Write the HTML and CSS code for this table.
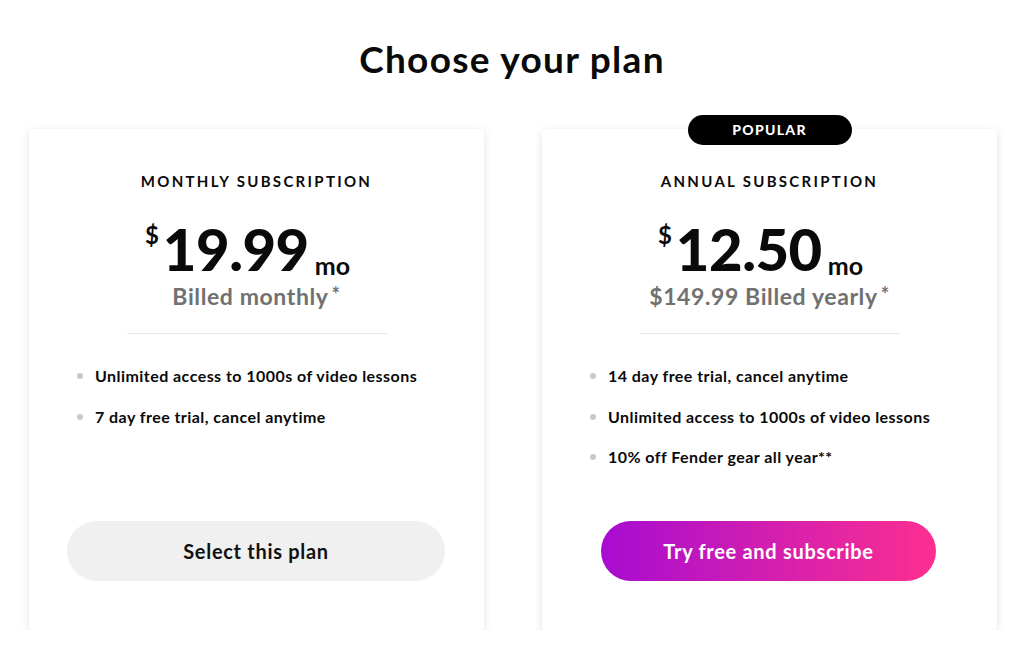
FILE: index.html
```html
<!DOCTYPE html>
<html lang="en">
<head>
<meta charset="utf-8">
<title>Choose your plan</title>
<link rel="stylesheet" href="styles.css">
</head>
<body>
<h1 class="title">Choose your plan</h1>
<div class="plans">
  <div class="card">
    <div class="plan-name">MONTHLY SUBSCRIPTION</div>
    <div class="price"><span class="cur">$</span><span class="amount">19.99</span><span class="per">mo</span></div>
    <div class="billed">Billed monthly<span class="ast">*</span></div>
    <hr class="divider">
    <ul class="features">
      <li>Unlimited access to 1000s of video lessons</li>
      <li>7 day free trial, cancel anytime</li>
    </ul>
    <button class="btn btn-plain">Select this plan</button>
  </div>
  <div class="card">
    <div class="badge">POPULAR</div>
    <div class="plan-name">ANNUAL SUBSCRIPTION</div>
    <div class="price"><span class="cur">$</span><span class="amount">12.50</span><span class="per">mo</span></div>
    <div class="billed">$149.99 Billed yearly<span class="ast">*</span></div>
    <hr class="divider">
    <ul class="features">
      <li>14 day free trial, cancel anytime</li>
      <li>Unlimited access to 1000s of video lessons</li>
      <li>10% off Fender gear all year**</li>
    </ul>
    <button class="btn btn-grad">Try free and subscribe</button>
  </div>
</div>
</body>
</html>
```
FILE: styles.css
```css
* { box-sizing: border-box; }
body {
  margin: 0;
  background: #fff;
  font-family: "Lato", "Open Sans", sans-serif;
  color: #0a0a0a;
}
.title {
  margin: 0;
  padding-top: 36px;
  height: 129px;
  text-align: center;
  font-size: 37px;
  font-weight: 700;
  line-height: 46px;
  letter-spacing: 1.3px;
}
.plans {
  display: flex;
  gap: 58px;
  padding: 0 27px 0 29px;
}
.card {
  position: relative;
  width: 455px;
  height: 501px;
  background: #fff;
  border-radius: 4px;
  box-shadow: 0 2px 8px rgba(0,0,0,0.12);
  display: flex;
  flex-direction: column;
  align-items: center;
  padding-top: 42px;
}
.badge {
  position: absolute;
  top: -14px;
  left: 50%;
  transform: translateX(-50%);
  width: 164px;
  height: 30px;
  border-radius: 15px;
  background: #000;
  color: #fff;
  font-size: 14px;
  font-weight: 900;
  letter-spacing: 1.3px;
  line-height: 30px;
  text-align: center;
}
.plan-name {
  font-size: 15px;
  font-weight: 700;
  letter-spacing: 2.3px;
  line-height: 20px;
}
.price {
  display: flex;
  align-items: flex-start;
  margin-top: 27px;
  height: 62px;
  padding-right: 18px;
}
.cur {
  font-size: 24px;
  font-weight: 700;
  line-height: 24px;
  margin-top: 5px;
  margin-right: 4px;
}
.amount {
  font-size: 58px;
  font-weight: 900;
  line-height: 62px;
  letter-spacing: -0.5px;
}
.per {
  font-size: 25px;
  font-weight: 700;
  align-self: flex-end;
  line-height: 30px;
  margin-left: 6px;
  margin-bottom: 0;
}
.billed {
  font-size: 23px;
  font-weight: 700;
  color: #717171;
  line-height: 30px;
  margin-top: 1px;
  letter-spacing: 0.6px;
}
.ast {
  font-size: 20px;
  vertical-align: top;
  margin-left: 3px;
  position: relative;
  top: -2px;
}
.divider {
  width: 260px;
  border: 0;
  border-top: 1px solid #e6e6e6;
  margin: 22px 0 0;
}
.features {
  list-style: none;
  margin: 32px 0 0;
  padding: 0 0 0 48px;
  align-self: stretch;
}
.features li {
  position: relative;
  font-size: 16px;
  font-weight: 700;
  line-height: 20px;
  letter-spacing: 0.45px;
  margin-bottom: 20.5px;
  padding-left: 18px;
}
.features li::before {
  content: "";
  position: absolute;
  left: 0;
  top: 7px;
  width: 6px;
  height: 6px;
  border-radius: 50%;
  background: #c8c8c8;
}
.btn {
  position: absolute;
  left: 38px;
  right: 39px;
  top: 392px;
  height: 60px;
  border: 0;
  border-radius: 30px;
  font-family: inherit;
  font-size: 20px;
  font-weight: 700;
  letter-spacing: 0.7px;
}
.btn-plain {
  background: #f0f0f0;
  color: #111;
}
.btn-grad {
  left: 59px;
  right: 61px;
  background: linear-gradient(90deg, #a70cd1 0%, #d21fb0 50%, #fd2e8f 100%);
  color: #fff;
}
```
